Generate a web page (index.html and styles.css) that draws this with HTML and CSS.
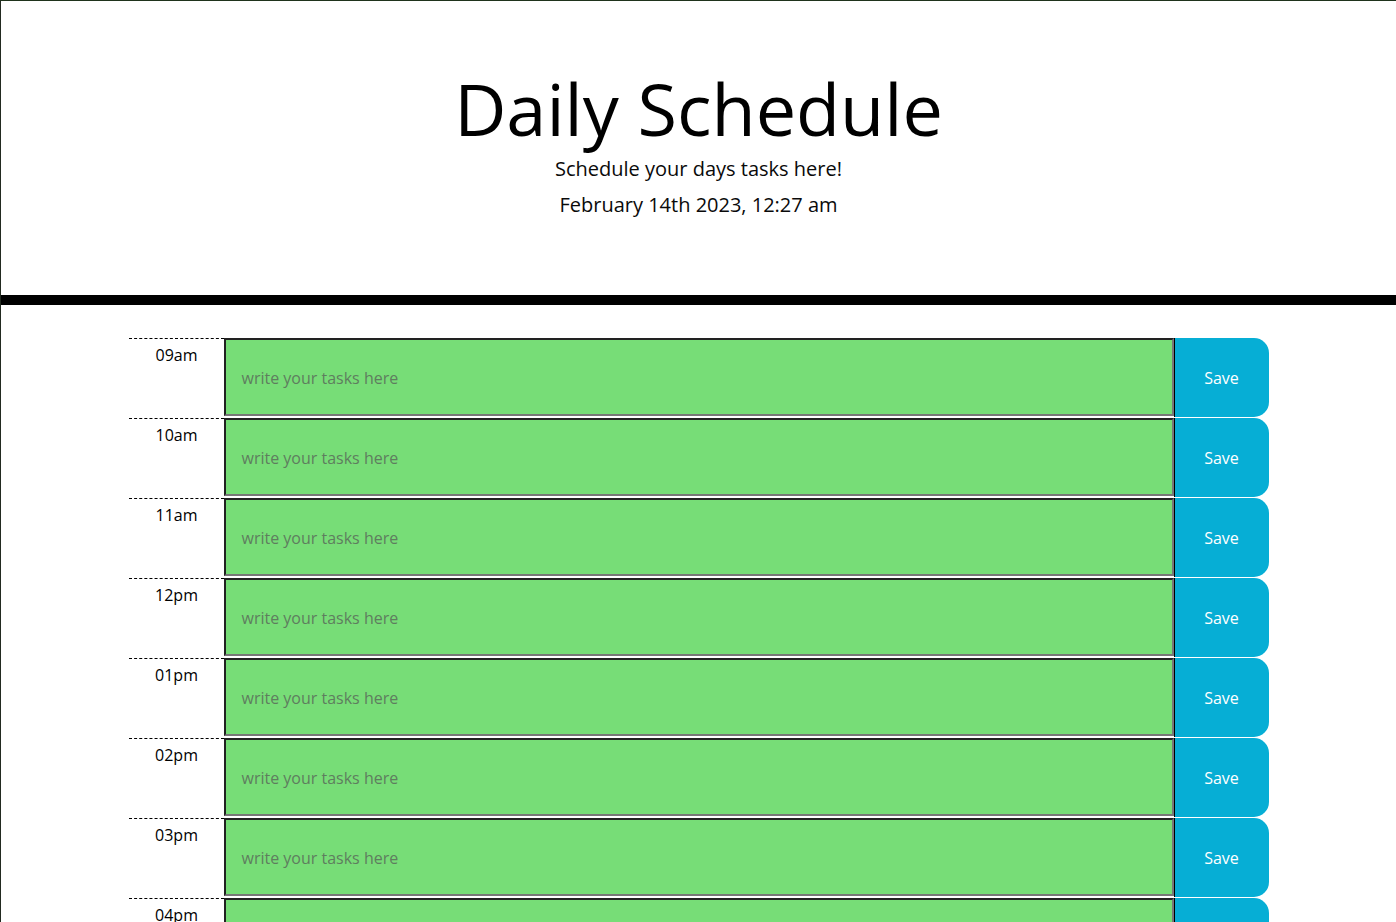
FILE: index.html
```html
<!DOCTYPE html>
<html lang="en">
<head>
<meta charset="utf-8">
<title>Daily Schedule</title>
<link rel="stylesheet" href="styles.css">
</head>
<body>
<header class="jumbotron">
  <h1 class="title">Daily Schedule</h1>
  <p class="lead">Schedule your days tasks here!</p>
  <p class="lead date">February 14th 2023, 12:27 am</p>
</header>
<main class="container">
  <div class="row"><div class="hour">09am</div><textarea class="task" placeholder="write your tasks here"></textarea><button class="saveBtn">Save</button></div>
  <div class="row"><div class="hour">10am</div><textarea class="task" placeholder="write your tasks here"></textarea><button class="saveBtn">Save</button></div>
  <div class="row"><div class="hour">11am</div><textarea class="task" placeholder="write your tasks here"></textarea><button class="saveBtn">Save</button></div>
  <div class="row"><div class="hour">12pm</div><textarea class="task" placeholder="write your tasks here"></textarea><button class="saveBtn">Save</button></div>
  <div class="row"><div class="hour">01pm</div><textarea class="task" placeholder="write your tasks here"></textarea><button class="saveBtn">Save</button></div>
  <div class="row"><div class="hour">02pm</div><textarea class="task" placeholder="write your tasks here"></textarea><button class="saveBtn">Save</button></div>
  <div class="row"><div class="hour">03pm</div><textarea class="task" placeholder="write your tasks here"></textarea><button class="saveBtn">Save</button></div>
  <div class="row"><div class="hour">04pm</div><textarea class="task" placeholder="write your tasks here"></textarea><button class="saveBtn">Save</button></div>
  <div class="row"><div class="hour">05pm</div><textarea class="task" placeholder="write your tasks here"></textarea><button class="saveBtn">Save</button></div>
</main>
</body>
</html>
```
FILE: styles.css
```css
html, body {
  margin: 0;
  padding: 0;
}
body {
  font-family: "Open Sans", "Liberation Sans", sans-serif;
  font-size: 16px;
  line-height: 1.5;
  color: #000;
  background: #fff;
  border-top: 1px solid #1f331c;
  border-left: 1px solid #222a20;
}
.jumbotron {
  box-sizing: content-box;
  height: 230px;
  padding-top: 64px;
  padding-bottom: 0;
  text-align: center;
  border-bottom: 10px solid #000;
}
.title {
  margin: 0;
  font-size: 72px;
  font-weight: 400;
  line-height: 86px;
  color: #000;
}
.lead {
  margin: 3px 0 0;
  font-size: 20px;
  font-weight: 400;
  line-height: 30px;
  color: #0a0a0a;
}
.date {
  margin-top: 6px;
}
.container {
  width: 1140px;
  margin: 33px auto 0;
}
.row {
  display: grid;
  grid-template-columns: 95px 950px 95px;
  height: 80px;
}
.hour {
  border-top: 1px dashed #000;
  text-align: center;
  padding-top: 4px;
  padding-left: 1px;
  font-size: 16px;
  line-height: 24px;
  color: #000;
}
.task {
  height: 78px;
  box-sizing: border-box;
  margin: 0;
  resize: none;
  background: #77dd77;
  border-style: solid;
  border-width: 2px;
  border-color: #222 #777 #777 #222;
  padding: 26px 15px 0 16px;
  font-family: "Open Sans", "Liberation Sans", sans-serif;
  font-size: 16px;
  line-height: 24px;
  color: #000;
  outline: none;
}
.task::placeholder {
  color: #5f7d5f;
  opacity: 1;
}
.saveBtn {
  height: 79px;
  margin: 0;
  padding: 0;
  border: none;
  border-left: 1px solid #000;
  border-radius: 0 15px 15px 0;
  background: #06aed5;
  color: #fff;
  font-family: "Open Sans", "Liberation Sans", sans-serif;
  font-size: 16px;
}
```
